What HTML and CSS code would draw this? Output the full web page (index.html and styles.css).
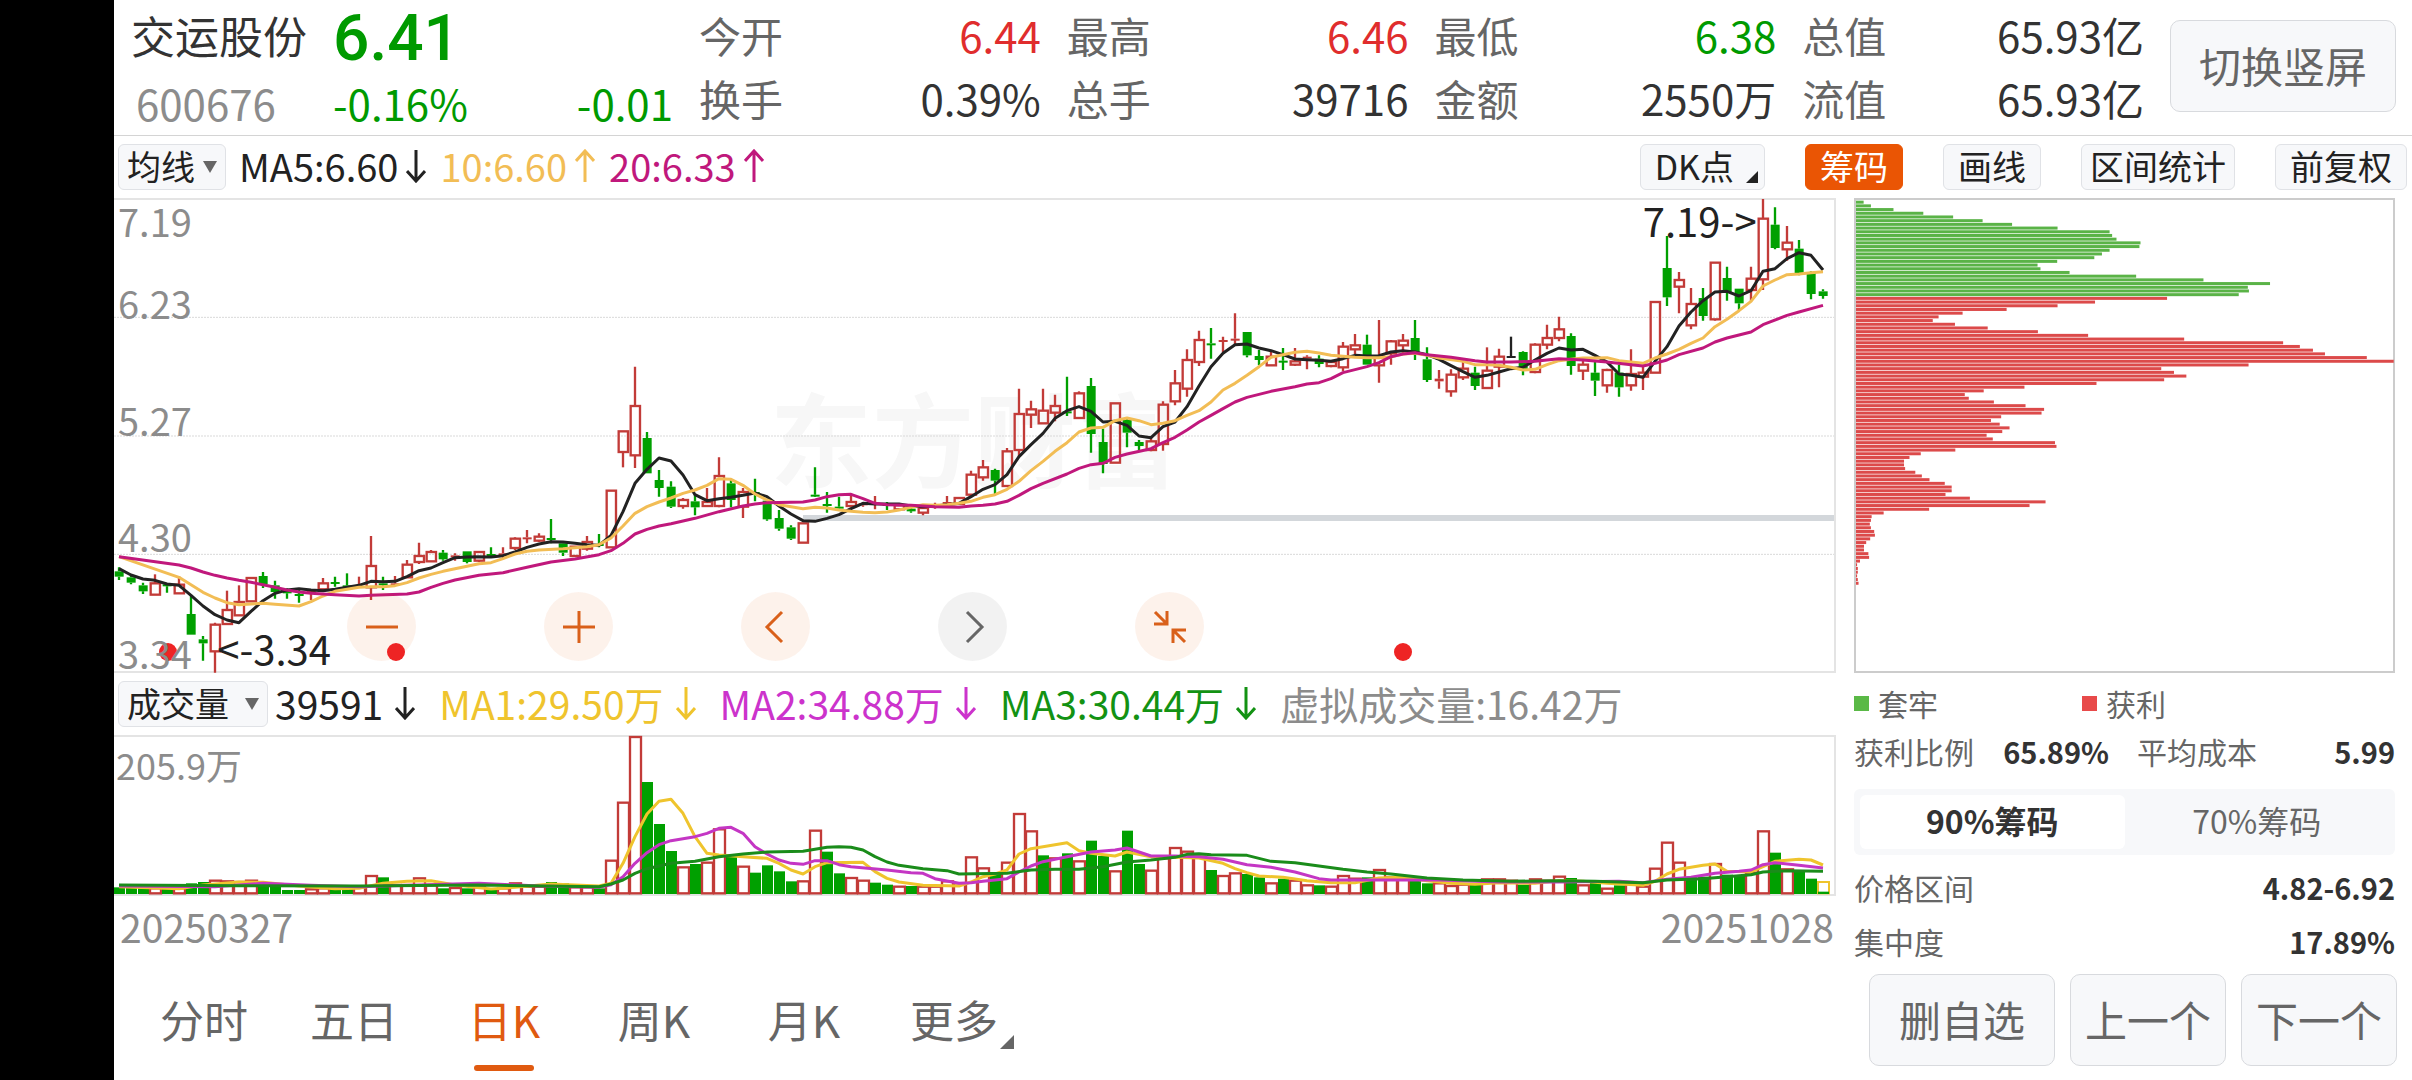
FILE: index.html
```html
<!DOCTYPE html>
<html lang="zh-CN">
<head>
  <meta charset="UTF-8">
  <meta name="viewport" content="width=device-width, initial-scale=1.0">
  <title>交运股份 600676</title>
  <link rel="stylesheet" href="styles.css">
</head>
<body>
  <svg class="sprite" aria-hidden="true">
    <symbol id="arrow-down" viewBox="0 0 20 34"><path d="M10 1v31M1 22l9 10 9-10"/></symbol>
    <symbol id="arrow-up" viewBox="0 0 20 34"><path d="M10 33V2M1 12L10 2l9 10"/></symbol>
  </svg>

  <div class="app">
    <header class="header">
      <div class="quote">
        <h1 class="name">交运股份</h1>
        <div class="price down">6.41</div>
        <div class="code">600676</div>
        <div class="change down"><span>-0.16%</span><span>-0.01</span></div>
      </div>
      <dl class="stats">
        <div><dt>今开</dt><dd class="up">6.44</dd></div>
        <div><dt>最高</dt><dd class="up">6.46</dd></div>
        <div><dt>最低</dt><dd class="down">6.38</dd></div>
        <div><dt>总值</dt><dd>65.93亿</dd></div>
        <div><dt>换手</dt><dd>0.39%</dd></div>
        <div><dt>总手</dt><dd>39716</dd></div>
        <div><dt>金额</dt><dd>2550万</dd></div>
        <div><dt>流值</dt><dd>65.93亿</dd></div>
      </dl>
      <button class="btn btn-rotate">切换竖屏</button>
    </header>

    <div class="toolbar">
      <div class="picker">
        <select class="chip" aria-label="主图指标"><option>均线</option></select>
        <i class="caret"></i>
      </div>
      <div class="legend">
        <span class="ma-black">MA5:6.60<svg><use href="#arrow-down"/></svg></span>
        <span class="ma-yellow">10:6.60<svg><use href="#arrow-up"/></svg></span>
        <span class="ma-pink">20:6.33<svg><use href="#arrow-up"/></svg></span>
      </div>
      <div class="tools">
        <button class="chip chip-more">DK点<i class="corner"></i></button>
        <button class="chip active">筹码</button>
        <button class="chip">画线</button>
        <button class="chip tight">区间统计</button>
        <button class="chip">前复权</button>
      </div>
    </div>

    <main class="main">
      <section class="charts">
        <div class="panel price-panel">
          <div class="watermark">东方财富</div>
          <svg id="kline" viewBox="0 30 5160 1413" preserveAspectRatio="none"></svg>
          <div class="controls">
            <button class="round" aria-label="缩小"><svg viewBox="0 0 34 34"><path d="M1 17h32"/></svg></button>
            <button class="round" aria-label="放大"><svg viewBox="0 0 34 34"><path d="M1 17h32M17 1v32"/></svg></button>
            <button class="round" aria-label="向左"><svg viewBox="0 0 34 34"><path d="M23 2L8 17l15 15"/></svg></button>
            <button class="round off" aria-label="向右"><svg viewBox="0 0 34 34"><path d="M11 2l15 15-15 15"/></svg></button>
            <button class="round" aria-label="退出全屏"><svg viewBox="0 0 34 34"><path d="M2 2l12 12M1 14h13V1M32 32L20 20M33 20H20v13"/></svg></button>
          </div>
          <i class="dot dot-1"></i>
          <i class="dot dot-2"></i>
          <i class="dot dot-3"></i>
          <ul class="axis">
            <li><span>7.19</span><span>6.23</span></li>
            <li><span>5.27</span></li>
            <li><span>4.30</span></li>
            <li><span>3.34</span></li>
          </ul>
          <span class="mark mark-low">&lt;-3.34</span>
          <span class="mark mark-high">7.19-&gt;</span>
        </div>

        <div class="toolbar">
          <div class="picker picker-vol">
            <select class="chip" aria-label="副图指标"><option>成交量</option></select>
            <i class="caret"></i>
          </div>
          <div class="legend legend-vol">
            <span class="ma-black">39591<svg><use href="#arrow-down"/></svg></span>
            <span class="vol-yellow">MA1:29.50万<svg><use href="#arrow-down"/></svg></span>
            <span class="vol-purple">MA2:34.88万<svg><use href="#arrow-down"/></svg></span>
            <span class="vol-green">MA3:30.44万<svg><use href="#arrow-down"/></svg></span>
            <span class="muted">虚拟成交量:16.42万</span>
          </div>
        </div>

        <div class="panel vol-panel">
          <svg id="volume" viewBox="0 201 5160 471" preserveAspectRatio="none"></svg>
          <span class="vol-max">205.9万</span>
        </div>
        <div class="dates"><time>20250327</time><time>20251028</time></div>
      </section>

      <aside class="side">
        <div class="chip-panel">
          <svg id="chips" viewBox="41 30 1476 1413" preserveAspectRatio="none"></svg>
        </div>
        <div class="chip-legend">
          <span><i class="swatch green"></i>套牢</span>
          <span><i class="swatch red"></i>获利</span>
        </div>
        <div class="row row-double">
          <span>获利比例</span><b>65.89%</b>
          <span>平均成本</span><b>5.99</b>
        </div>
        <div class="switch">
          <button class="on">90%筹码</button>
          <button>70%筹码</button>
        </div>
        <div class="row"><span>价格区间</span><b>4.82-6.92</b></div>
        <div class="row"><span>集中度</span><b>17.89%</b></div>
      </aside>
    </main>

    <footer class="footer">
      <nav class="tabs">
        <button>分时</button>
        <button>五日</button>
        <button class="current">日K</button>
        <button>周K</button>
        <button>月K</button>
        <button class="more">更多<i class="corner"></i></button>
      </nav>
      <div class="actions">
        <button class="btn wide">删自选</button>
        <button class="btn">上一个</button>
        <button class="btn">下一个</button>
      </div>
    </footer>
  </div>

  <script src="chart.js"></script>
</body>
</html>
```
FILE: styles.css
```css
* {
  margin: 0;
  padding: 0;
  box-sizing: border-box;
}

body {
  min-height: 100vh;
  background: #fff;
  border-left: 114px solid #000;
  font-family: "Noto Sans CJK SC", "Noto Sans", sans-serif;
  color: #333;
}

button, select {
  font-family: inherit;
  color: inherit;
  border: none;
  background: none;
  cursor: pointer;
}

ul {
  list-style: none;
}

.sprite {
  position: absolute;
  width: 0;
  height: 0;
}

.app {
  min-height: 100vh;
  display: flex;
  flex-direction: column;
}

.up { color: #e02d2d; }
.down { color: #009a00; }
.muted { color: #8c8c8c; }

/* header */
.header {
  height: 136px;
  padding: 0 16px 3px 17px;
  display: flex;
  align-items: center;
  gap: 26px;
  border-bottom: 1px solid #d4d4d4;
}

.quote {
  width: 542px;
  padding-top: 8px;
  display: grid;
  grid-template-columns: 176px 1fr;
  grid-template-rows: 66px 70px;
  column-gap: 26px;
  line-height: 66px;
  font-size: 42px;
}

.name {
  font-size: 44px;
  font-weight: 400;
}

.price {
  font-family: Roboto, sans-serif;
  font-size: 64px;
  font-weight: 500;
  line-height: 74px;
}

.code, .change {
  line-height: 70px;
}

.code {
  padding-left: 5px;
  color: #8c8c8c;
}

.change {
  display: flex;
  justify-content: space-between;
}

.stats {
  flex: 1;
  display: grid;
  grid-template-columns: repeat(4, 1fr);
  column-gap: 26px;
  font-size: 42px;
  line-height: 63px;
}

.stats div {
  display: flex;
  justify-content: space-between;
}

.stats dt {
  color: #666;
}

.btn {
  width: 156px;
  height: 92px;
  padding-bottom: 3px;
  border: 1px solid #d8dade;
  border-radius: 10px;
  background: #f7f8fa;
  color: #666;
  font-size: 42px;
  line-height: 60px;
}

.btn.wide {
  width: 186px;
}

.btn-rotate {
  width: 226px;
}

/* toolbars */
.toolbar {
  height: 62px;
  padding: 0 5px 0 4px;
  display: flex;
  align-items: center;
}

.chip {
  height: 46px;
  padding: 0 14px 3px;
  border: 1px solid #e0e2e6;
  border-radius: 6px;
  background: #f7f8fa;
  color: #222;
  font-size: 34px;
  line-height: 42px;
  white-space: nowrap;
}

.chip.tight {
  padding: 0 8px 3px;
}

.chip.active {
  border-color: #ea5504;
  background: #ea5504;
  color: #fff;
}

.chip-more {
  position: relative;
  padding-right: 30px;
}

.corner {
  position: absolute;
  right: 6px;
  bottom: 6px;
  border-left: 12px solid transparent;
  border-bottom: 12px solid currentColor;
}

.picker {
  position: relative;
  width: 108px;
}

.picker .chip {
  width: 100%;
  padding: 0 8px 3px;
  appearance: none;
}

.picker-vol {
  width: 150px;
}

.caret {
  position: absolute;
  right: 9px;
  top: 17px;
  border: 7px solid transparent;
  border-top: 12px solid #666;
  border-bottom: none;
  pointer-events: none;
}

.legend {
  flex: 1;
  display: flex;
  gap: 14px;
  padding: 0 0 3px 13px;
  font-size: 38px;
  line-height: 46px;
  white-space: nowrap;
}

.legend span {
  display: flex;
  align-items: center;
  gap: 8px;
}

.legend svg {
  width: 20px;
  height: 34px;
  fill: none;
  stroke: currentColor;
  stroke-width: 3;
}

.legend-vol {
  gap: 24px;
  padding-left: 7px;
  font-size: 39px;
}

.legend-vol span {
  gap: 12px;
}

.ma-black { color: #222; }
.ma-yellow { color: #f2bd55; }
.ma-pink { color: #c0187c; }
.vol-yellow { color: #efc42d; }
.vol-purple { color: #cc33cc; }
.vol-green { color: #139213; }

.tools {
  display: flex;
  gap: 40px;
}

/* charts */
.main {
  flex: 1;
  display: grid;
  grid-template-columns: minmax(0, 1fr) 541px;
  gap: 18px;
  padding-right: 17px;
}

.panel {
  position: relative;
  border: 2px solid #e4e4e4;
  border-left: none;
}

.panel > svg, .chip-panel svg {
  display: block;
  width: 100%;
  height: 100%;
  overflow: visible;
  position: relative;
}

.price-panel {
  height: 475px;
}

.vol-panel {
  height: 161px;
}

.watermark {
  position: absolute;
  inset: 0;
  display: flex;
  align-items: center;
  justify-content: center;
  color: #f7f7f7;
  font-size: 102px;
  font-weight: 700;
}

.axis {
  position: absolute;
  inset: 0;
  padding: 6px 0 3px 4px;
  display: grid;
  grid-template-rows: 112px repeat(3, 1fr);
  color: #8c8c8c;
  font-size: 38px;
  line-height: 30px;
  pointer-events: none;
}

.axis li {
  display: flex;
  flex-direction: column;
  justify-content: flex-end;
}

.axis li:first-child {
  justify-content: space-between;
}

.mark {
  position: absolute;
  color: #222;
  font-size: 40px;
  line-height: 40px;
}

.mark-low {
  left: 6%;
  bottom: 3px;
}

.mark-high {
  right: 4.5%;
  top: 0;
}

.controls {
  position: absolute;
  left: 233px;
  bottom: 10px;
  display: flex;
  gap: 128px;
}

.round {
  width: 69px;
  height: 69px;
  border-radius: 50%;
  background: rgba(234, 85, 4, 0.08);
  color: #d9601a;
}

.round.off {
  background: rgba(0, 0, 0, 0.05);
  color: #666;
}

.round svg {
  width: 34px;
  height: 34px;
  display: block;
  margin: auto;
  fill: none;
  stroke: currentColor;
  stroke-width: 3;
}

.dot {
  position: absolute;
  bottom: 10px;
  width: 18px;
  height: 18px;
  border-radius: 50%;
  background: #ee2424;
}

.dot-1 { left: 45px; }
.dot-2 { left: 273px; }
.dot-3 { left: 74.4%; }

.vol-max {
  position: absolute;
  left: 2px;
  top: 7px;
  color: #8c8c8c;
  font-size: 36px;
  line-height: 40px;
}

.dates {
  display: flex;
  justify-content: space-between;
  padding: 0 2px 0 6px;
  color: #8c8c8c;
  font-size: 39px;
  line-height: 60px;
}

/* side panel */
.chip-panel {
  height: 475px;
  border: 2px solid #ccc;
}

.chip-legend {
  display: grid;
  grid-template-columns: 228px 1fr;
  margin-top: 7px;
  color: #666;
  font-size: 30px;
  line-height: 46px;
}

.chip-legend span {
  display: flex;
  align-items: center;
  gap: 9px;
}

.swatch {
  width: 15px;
  height: 15px;
}

.swatch.green { background: #5ab946; }
.swatch.red { background: #e84a4a; }

.row {
  display: flex;
  justify-content: space-between;
  color: #666;
  font-size: 30px;
  line-height: 54px;
}

.row b {
  color: #333;
  font-size: 29px;
}

.row-double {
  display: grid;
  grid-template-columns: 120px 135px 1fr auto;
  line-height: 50px;
}

.row-double b {
  text-align: right;
}

.row-double span + b + span {
  padding-left: 28px;
}

.switch {
  display: flex;
  height: 66px;
  margin: 13px 0 5px;
  padding: 6px;
  border-radius: 6px;
  background: #f7f8fa;
}

.switch button {
  flex: 1;
  padding-bottom: 4px;
  border-radius: 6px;
  color: #666;
  font-size: 32px;
  line-height: 50px;
}

.switch .on {
  background: #fff;
  color: #333;
  font-weight: 700;
}

/* footer */
.footer {
  height: 110px;
  padding: 0 15px;
  display: flex;
  justify-content: space-between;
}

.tabs {
  display: flex;
}

.tabs button {
  position: relative;
  width: 150px;
  height: 101px;
  padding-bottom: 3px;
  color: #666;
  font-size: 44px;
}

.tabs .current {
  color: #e05a10;
}

.tabs .current::after {
  content: "";
  position: absolute;
  left: 45px;
  bottom: 0;
  width: 60px;
  height: 6px;
  border-radius: 3px;
  background: #e05a10;
}

.tabs .corner {
  right: 15px;
  bottom: 22px;
  border-width: 0 0 14px 14px;
}

.actions {
  display: flex;
  gap: 15px;
  padding-top: 4px;
}
```
FILE: chart.js
```js
// All y values are in viewBox units, one candle every 36 units.
const STEP = 36;
const FIRST = 15;
const RED = '#c23b38';
const GREEN = '#00a000';
const colors = { r: RED, g: GREEN, k: '#222' };

// type, body top, body bottom, high, low
const candles = `
g 1144 1160 1132 1170,g 1162 1178 1155 1183,g 1186 1204 1178 1212,r 1180 1214 1153 1214,g 1183 1189 1180 1208,
r 1184 1210 1158 1210,g 1272 1334 1218 1334,g 1348 1360 1338 1412,r 1304 1384 1298 1448,r 1260 1302 1202 1302,
r 1236 1276 1186 1276,r 1164 1234 1164 1234,g 1158 1182 1146 1194,g 1186 1206 1172 1226,g 1200 1210 1195 1226,
g 1212 1218 1200 1238,r 1202 1208 1200 1230,r 1180 1198 1164 1198,g 1176 1180 1160 1190,g 1186 1190 1150 1190,
r 1188 1190 1160 1190,r 1128 1192 1038 1230,g 1180 1186 1160 1200,r 1180 1188 1158 1188,r 1124 1162 1110 1162,
r 1098 1116 1058 1122,r 1086 1114 1080 1114,g 1088 1108 1080 1112,r 1096 1098 1090 1112,g 1084 1116 1084 1120,
r 1086 1112 1086 1116,g 1092 1098 1072 1102,r 1090 1094 1072 1104,r 1046 1074 1042 1080,r 1042 1046 1020 1060,
r 1040 1052 1030 1056,g 1044 1050 987 1060,g 1060 1088 1056 1098,r 1070 1098 1070 1098,r 1056 1076 1038 1082,
g 1062 1066 1032 1072,r 902 1072 902 1072,r 724 786 724 832,r 648 796 530 834,g 744 850 726 850,
g 870 894 840 920,g 890 950 874 954,r 930 948 924 956,g 934 952 915 976,r 936 948 894 948,
r 858 948 802 952,g 880 930 870 952,r 906 950 894 984,g 906 910 866 934,g 932 988 926 992,
g 984 1016 960 1022,g 1012 1046 1006 1050,r 1000 1058 1000 1058,g 914 918 832 920,g 942 946 906 968,
g 950 956 920 962,r 936 948 910 950,r 940 946 936 950,r 938 942 918 958,g 942 946 936 960,
r 946 958 944 960,g 956 964 950 968,r 954 968 950 976,r 942 946 938 956,r 936 940 918 944,
r 924 942 924 942,r 854 914 842 920,r 832 862 810 872,g 840 872 836 912,r 784 888 774 888,
r 672 780 596 800,r 658 674 632 714,r 662 700 596 702,r 648 668 614 694,g 664 668 560 678,
r 610 684 604 684,g 588 732 564 788,g 756 822 716 850,r 640 818 640 818,g 690 728 684 772,
g 756 768 750 784,r 754 780 742 784,r 644 762 634 782,r 580 634 540 646,r 510 596 478 620,
r 450 516 422 528,g 460 464 414 506,r 450 454 440 486,r 446 450 370 462,g 426 496 426 502,
g 498 510 480 526,r 500 526 486 526,g 512 516 474 540,r 514 524 474 528,r 500 506 496 538,
g 506 522 496 532,r 516 528 510 532,r 470 532 456 544,r 466 478 432 492,g 464 524 434 524,
r 500 526 390 578,r 454 490 450 524,r 452 466 432 490,g 444 486 390 510,g 508 570 472 576,
r 566 574 540 596,r 554 604 538 620,r 536 562 516 570,g 548 588 530 600,r 542 594 472 594,
r 500 530 476 592,k 498 502 440 502,g 486 540 484 556,r 464 546 460 550,r 444 464 404 478,
r 418 444 380 454,g 438 528 430 554,r 524 542 510 570,g 548 572 510 618,r 540 586 536 608,
g 548 592 524 620,r 552 586 478 602,r 548 560 530 600,r 336 548 336 548,g 234 322 138 348,
r 270 290 246 370,r 342 406 294 418,g 324 378 294 392,r 218 388 218 392,g 264 306 230 332,
g 296 340 296 360,r 266 300 230 334,r 86 268 27 300,g 104 174 52 178,r 158 178 108 212,
g 176 250 150 256,g 248 312 244 328,g 304 318 298 326`;

const ma5 = '0:1136 1:1155 2:1167 3:1171 4:1182 5:1186 6:1216 7:1248 8:1274 9:1290 10:1298 11:1264 12:1232 13:1210 14:1200 15:1196 16:1200 17:1202 18:1198 19:1192 20:1186 21:1174 22:1175 23:1174 24:1160 25:1142 26:1134 27:1118 28:1103 29:1101 30:1100 31:1101 32:1097 33:1086 34:1072 35:1062 36:1055 37:1056 38:1060 39:1064 40:1066 41:1036 42:965 43:880 44:838 45:804 46:813 47:855 48:914 49:932 50:926 51:922 52:916 53:909 54:920 55:948 56:972 57:992 58:994 59:985 60:974 61:956 62:940 63:942 64:942 65:942 66:948 67:950 68:948 69:944 70:940 71:920 72:898 73:884 74:854 75:800 76:764 77:730 78:685 79:662 80:650 81:664 82:696 83:694 84:706 85:738 86:743 87:710 88:696 89:650 90:588 91:530 92:490 93:464 94:462 95:474 96:482 97:494 98:507 99:509 100:511 101:514 102:506 103:496 104:498 105:497 106:486 107:482 108:486 109:494 110:508 111:527 112:545 113:562 114:556 115:546 116:536 117:532 118:510 119:490 120:474 121:480 122:478 123:496 124:516 125:552 126:556 127:562 128:514 129:470 130:408 131:366 132:332 133:306 134:304 135:318 136:302 137:244 138:236 139:206 140:188 141:196 142:240';
const ma10 = '0:1100 5:1162 6:1184 7:1207 8:1224 9:1238 10:1244 11:1242 12:1240 13:1243 15:1248 16:1235 17:1218 18:1204 19:1198 20:1192 21:1190 22:1190 23:1187 24:1178 25:1164 26:1153 27:1144 28:1136 30:1121 31:1118 32:1106 33:1092 34:1084 35:1080 37:1076 39:1070 40:1064 41:1044 42:1008 43:970 44:950 45:936 46:924 47:910 48:900 49:886 50:866 51:868 52:886 53:912 54:930 55:944 56:950 57:956 58:952 59:954 60:960 61:964 62:967 63:968 64:966 65:960 66:952 67:944 68:946 69:944 70:940 71:934 72:922 73:914 74:898 75:874 76:842 77:814 78:784 79:758 80:726 81:714 82:712 83:692 84:684 85:692 86:704 87:700 88:692 89:676 90:662 91:636 92:600 93:580 94:556 95:530 96:502 97:494 98:487 99:484 100:489 101:496 102:499 103:502 104:503 105:503 106:500 107:492 108:490 109:496 110:504 112:514 113:524 114:524 115:526 116:532 117:540 118:538 119:524 120:512 121:508 122:504 123:504 124:503 125:512 126:516 127:520 128:504 129:492 130:478 131:460 132:444 133:410 134:388 135:362 136:334 137:288 138:270 139:254 140:252 141:248 142:245';
const ma20 = '0:1100 5:1125 6:1134 7:1146 8:1156 9:1164 10:1171 11:1177 12:1184 13:1192 14:1200 15:1206 16:1210 17:1212 18:1214 20:1218 21:1216 24:1212 25:1206 26:1192 27:1180 28:1170 30:1156 32:1148 34:1132 36:1116 38:1107 40:1094 41:1082 42:1060 43:1032 44:1018 45:1008 46:1001 48:985 50:965 52:948 53:942 54:938 57:936 58:930 59:920 60:914 61:913 62:926 63:940 64:944 66:946 68:950 70:952 71:948 72:946 73:942 74:934 75:916 76:896 77:880 79:852 80:835 81:824 82:820 83:802 84:792 86:776 87:758 88:742 89:720 90:696 91:676 92:656 93:636 94:622 96:604 98:590 99:582 100:578 101:566 102:548 104:530 105:518 106:500 107:492 108:488 109:494 111:502 113:512 114:516 116:516 118:514 120:506 122:510 124:516 126:524 127:528 128:520 129:510 130:494 132:474 133:456 134:444 136:426 137:404 139:376 140:366 142:346';

// type and bar top
const volumes = 'g652 g652 g654 r655 g654 r655 g640 g636 r632 r634 r636 r632 g645 g646 g660 g660 r658 r655 g655 g655 r652 r618 g622 r645 r645 r625 r645 g655 r654 g655 r652 g655 r655 r640 r650 r650 g636 g640 r652 r652 g655 r572 r398 r201 g336 g462 g543 r592 g582 r578 r478 g560 r590 g608 g586 g604 g634 r634 r482 g545 g610 r624 r632 g638 g644 r650 g648 r650 r650 r634 r640 r562 r595 g612 r578 r432 r484 g556 r565 g550 r574 g512 g558 r604 g482 g582 r602 r565 r534 r545 r560 g600 r618 r610 g612 g622 r640 g626 r632 r646 g646 r650 r618 r626 g622 r600 r622 r625 g630 g640 r640 r648 r644 g642 r628 r628 r632 g644 r628 r632 r620 g624 r646 g636 r656 g646 r640 r650 r596 r518 r578 g622 g620 r582 g614 g616 r608 r484 g548 r598 g604 g626';

const volMa1 = '0:650 5:656 7:645 10:636 12:637 15:648 18:656 20:655 22:640 24:634 26:632 28:645 31:657 33:652 36:642 40:648 41:640 42:580 43:500 44:432 45:394 46:388 47:430 48:500 49:550 50:555 52:560 54:565 55:580 56:600 57:612 58:590 59:578 62:577 63:605 64:625 65:636 67:646 70:648 71:636 72:620 73:612 74:600 75:552 76:536 78:524 79:518 80:542 81:550 83:558 84:546 86:560 88:562 90:564 92:580 93:596 94:608 95:618 97:622 99:632 101:638 103:638 105:624 107:622 109:632 111:640 113:643 115:638 118:640 120:632 122:634 124:640 127:646 128:634 129:612 130:598 132:586 133:582 134:604 136:606 137:590 138:574 140:568 141:570 142:585';
const volMa2 = '0:648 8:650 12:640 16:646 20:650 25:645 30:640 35:648 40:652 41:644 42:620 43:580 44:548 45:524 46:512 48:500 49:490 50:475 51:472 52:490 53:530 54:552 55:570 56:580 57:583 58:572 59:572 60:584 61:590 64:600 66:608 67:610 68:626 70:640 71:638 72:634 74:626 75:606 76:588 77:575 79:560 81:546 83:540 84:534 85:546 86:558 88:558 90:560 92:568 94:584 96:592 98:606 100:626 101:630 105:630 110:630 115:636 120:636 125:634 127:638 129:628 131:622 133:610 135:604 136:600 137:584 138:578 140:586 142:594';
const volMa3 = '0:645 10:647 20:648 30:645 40:650 41:642 42:630 43:610 44:596 46:580 48:574 50:560 52:552 54:546 57:544 59:532 60:530 61:532 62:540 63:560 64:576 65:586 67:596 69:602 70:612 74:610 76:600 78:598 80:598 82:590 84:576 86:570 88:562 89:553 90:551 91:554 94:556 96:574 98:578 100:588 102:598 104:606 106:612 109:624 112:630 116:634 120:632 123:634 127:638 129:630 132:626 134:620 136:614 137:606 139:602 142:604';

// right edge of each price bucket, the first 26 are above the current price
const chips = [62,82,144,226,308,389,470,595,738,745,757,823,820,738,717,696,594,540,548,628,811,996,1179,1118,1121,1093,
  896,698,595,455,334,268,252,313,403,541,679,943,1215,1261,1297,1330,1445,1519,1120,880,915,949,888,702,504,392,340,351,
  420,507,558,551,440,412,436,463,443,400,417,588,592,314,219,188,173,173,176,204,222,243,285,304,304,287,354,562,518,242,
  117,84,82,79,82,91,93,80,69,63,63,75,77,52,44,46,46,44,46,48];

const xAt = i => FIRST + i * STEP;

function rect(x, y, w, h, attrs) {
  return `<rect x="${x}" y="${y}" width="${w}" height="${h}" ${attrs}/>`;
}

function line(data, color) {
  const points = data.split(' ').map(p => {
    const [i, y] = p.split(':').map(Number);
    return `${xAt(i)},${y}`;
  }).join(' ');
  return `<polyline points="${points}" fill="none" stroke="${color}" stroke-width="9" stroke-linejoin="round"/>`;
}

function drawKline() {
  let html = '';
  [382, 738, 1093].forEach(y => {
    html += `<path d="M0 ${y}H5160" stroke="#d9d9d9" stroke-width="3" stroke-dasharray="6 3"/>`;
  });
  html += rect(2067, 975, 3093, 18, 'fill="#d3d7db"');

  candles.trim().split(/,\s*/).forEach((row, i) => {
    const [type, ...v] = row.split(' ');
    const [top, bottom, high, low] = v.map(Number);
    const color = colors[type];
    const x = xAt(i);
    html += `<path d="M${x} ${high}V${top}M${x} ${bottom}V${low}" stroke="${color}" stroke-width="7"/>`;
    if (type === 'r' && bottom - top > 8) {
      html += rect(x - 13, top, 28, bottom - top, `fill="none" stroke="${color}" stroke-width="7"`);
    } else {
      html += rect(x - 13, top, 27, Math.max(bottom - top, 6), `fill="${color}"`);
    }
  });

  html += line(ma5, '#222') + line(ma10, '#f2bd55') + line(ma20, '#c0187c');
  document.getElementById('kline').innerHTML = html;
}

function drawVolume() {
  let html = '';
  volumes.split(' ').forEach((bar, i) => {
    const top = Number(bar.slice(1));
    const x = xAt(i);
    if (bar[0] === 'r') {
      html += rect(x - 15, top, 33, 670 - top, `fill="#fff" stroke="${RED}" stroke-width="7"`);
    } else {
      html += rect(x - 15, top, 33, 672 - top, `fill="${GREEN}"`);
    }
  });
  // today: estimated volume with the traded part inside
  html += rect(xAt(142) - 15, 636, 33, 34, 'fill="#fff" stroke="#efc42d" stroke-width="6"');
  html += rect(xAt(142) - 15, 665, 33, 7, `fill="${GREEN}"`);

  html += line(volMa1, '#efc42d') + line(volMa2, '#c436c4') + line(volMa3, '#1a8c1a');
  document.getElementById('volume').innerHTML = html;
}

function drawChips() {
  const html = chips.map((end, k) => {
    const fill = k < 26 ? '#5ab347' : '#dc4a4a';
    return rect(41, 32 + k * 11.1, end - 41, 9, `fill="${fill}"`);
  }).join('');
  document.getElementById('chips').innerHTML = html;
}

drawKline();
drawVolume();
drawChips();
```
